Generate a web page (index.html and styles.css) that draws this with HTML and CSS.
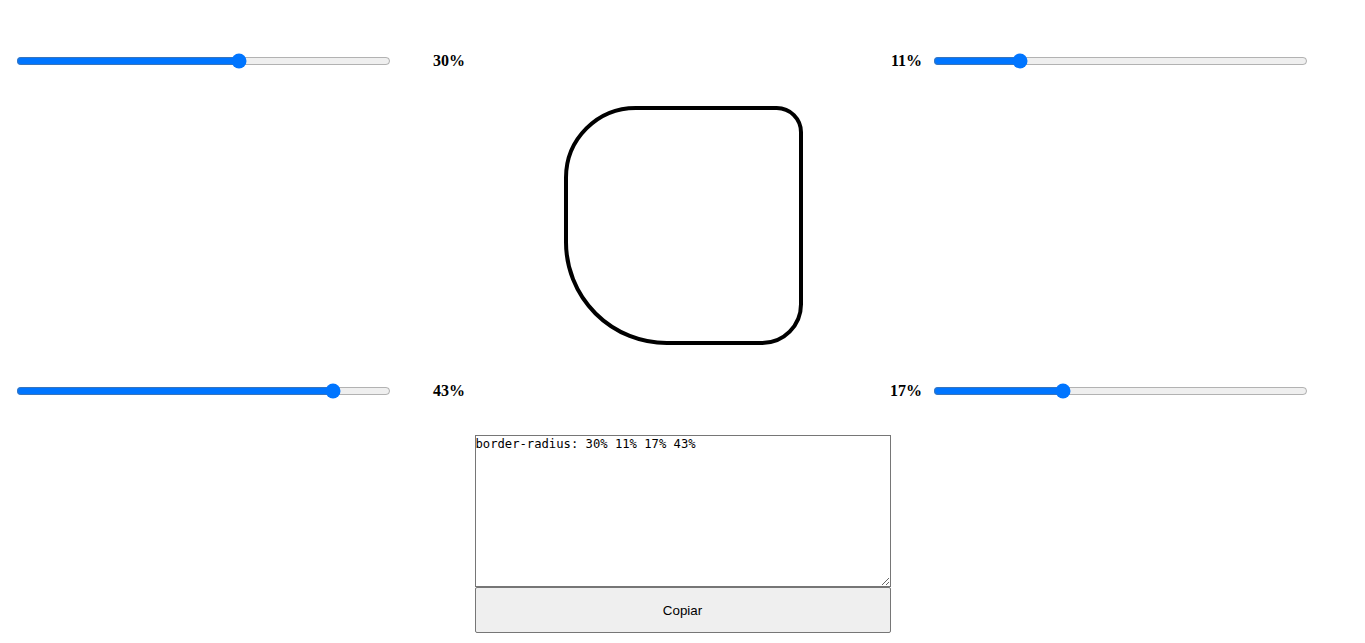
FILE: index.html
```html
<!DOCTYPE html>
<html lang="es">
<head>
<meta charset="utf-8">
<title>Border radius</title>
<link rel="stylesheet" href="styles.css">
</head>
<body>
<div class="page">
  <div class="row row-top">
    <div class="group group-left">
      <input class="slider" type="range" min="0" max="50" value="30">
      <span class="value value-left">30%</span>
    </div>
    <div class="group group-right">
      <span class="value value-right">11%</span>
      <input class="slider" type="range" min="0" max="50" value="11">
    </div>
  </div>
  <div class="stage">
    <div class="shape"></div>
  </div>
  <div class="row row-bottom">
    <div class="group group-left">
      <input class="slider" type="range" min="0" max="50" value="43">
      <span class="value value-left">43%</span>
    </div>
    <div class="group group-right">
      <span class="value value-right">17%</span>
      <input class="slider" type="range" min="0" max="50" value="17">
    </div>
  </div>
  <div class="output">
    <textarea class="code" spellcheck="false">border-radius: 30% 11% 17% 43%</textarea>
    <button class="copy" type="button">Copiar</button>
  </div>
</div>
</body>
</html>
```

FILE: styles.css
```css
html, body {
  margin: 0;
  padding: 0;
  background: #fff;
}

.page {
  width: 1365px;
  font-family: "Liberation Serif", "Times New Roman", serif;
}

.row {
  display: flex;
  justify-content: space-between;
  align-items: center;
  height: 16px;
}

.row-top {
  margin-top: 53px;
}

.row-bottom {
  margin-top: 38px;
}

.group {
  display: flex;
  align-items: center;
}

.group-left {
  padding-left: 16px;
}

.group-right {
  padding-right: 57px;
}

.slider {
  width: 375px;
  height: 16px;
  margin: 0;
  padding: 0;
}

.value {
  font-weight: bold;
  font-size: 16px;
  line-height: 16px;
  color: #000;
}

.value-left {
  margin-left: 42px;
}

.value-right {
  margin-right: 11px;
}

.stage {
  display: flex;
  justify-content: center;
  margin-top: 37px;
}

.shape {
  width: 231px;
  height: 231px;
  border: 4px solid #000;
  border-radius: 30% 11% 17% 43%;
  margin-left: 1px;
}

.output {
  display: flex;
  flex-direction: column;
  align-items: center;
  margin-top: 36px;
}

.code {
  box-sizing: border-box;
  width: 416px;
  height: 152px;
  margin: 0;
  padding: 1px 0 0 0;
  border: 1px solid #767676;
  font-family: "DejaVu Sans Mono", "Liberation Mono", monospace;
  font-size: 12.2px;
  line-height: 14px;
  color: #000;
  background: #fff;
  resize: both;
}

.copy {
  box-sizing: border-box;
  width: 416px;
  height: 46px;
  margin: 0;
  border: 1px solid #767676;
  border-radius: 2px;
  background: #efefef;
  font-family: "Liberation Sans", Arial, sans-serif;
  font-size: 13.33px;
  color: #000;
}
```
